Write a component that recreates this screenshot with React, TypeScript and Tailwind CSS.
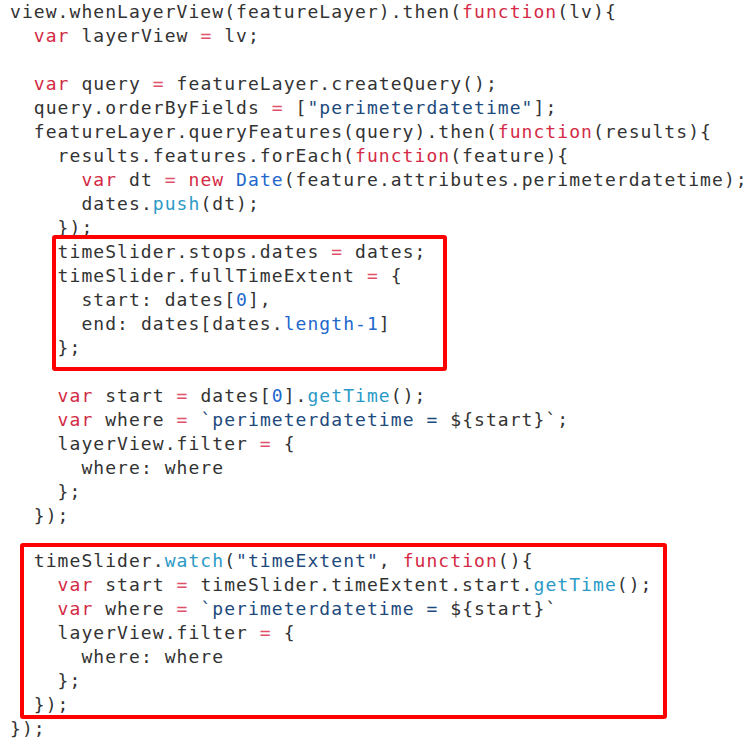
import type { ReactNode } from "react";

// token helpers
const K = ({ children }: { children: ReactNode }) => <span className="text-[#d42a45]">{children}</span>;
const O = ({ children }: { children: ReactNode }) => <span className="text-[#e0506a]">{children}</span>;
const S = ({ children }: { children: ReactNode }) => <span className="text-[#1d4a7c]">{children}</span>;
const N = ({ children }: { children: ReactNode }) => <span className="text-[#2167cc]">{children}</span>;
const M = ({ children }: { children: ReactNode }) => <span className="text-[#2b9ac6]">{children}</span>;

function Line({ children }: { children?: ReactNode }) {
  return <div className="h-[24px] leading-[24px] whitespace-pre">{children ?? " "}</div>;
}

export default function App() {
  return (
    <div className="w-[754px] h-[745px] bg-white overflow-hidden">
      <div
        className="pl-[10px] text-[18px] tracking-[1.06px] text-[#333333]"
        style={{ fontFamily: '"DejaVu Sans Mono", "Liberation Mono", monospace' }}
      >
        <Line>
          view.whenLayerView(featureLayer).then(<K>function</K>(lv){"{"}
        </Line>
        <Line>
          {"  "}<K>var</K> layerView <O>=</O> lv;
        </Line>
        <Line />
        <Line>
          {"  "}<K>var</K> query <O>=</O> featureLayer.createQuery();
        </Line>
        <Line>
          {"  "}query.orderByFields <O>=</O> [<S>"perimeterdatetime"</S>];
        </Line>
        <Line>
          {"  "}featureLayer.queryFeatures(query).then(<K>function</K>(results){"{"}
        </Line>
        <Line>
          {"    "}results.features.forEach(<K>function</K>(feature){"{"}
        </Line>
        <Line>
          {"      "}<K>var</K> dt <O>=</O> <K>new</K> <N>Date</N>(feature.attributes.perimeterdatetime);
        </Line>
        <Line>
          {"      "}dates.<M>push</M>(dt);
        </Line>
        <Line>{"    "}{"});"}</Line>

        {/* first highlight */}
        <div className="relative ml-[42px] -mt-[5px] -mb-[11px] w-[395px] border-4 border-[#ff0000] rounded-[3px] bg-white pt-[1px] pb-[7px] pl-[1.6px]">
          <Line>
            timeSlider.stops.dates <O>=</O> dates;
          </Line>
          <Line>
            timeSlider.fullTimeExtent <O>=</O> {"{"}
          </Line>
          <Line>
            {"  "}start: dates[<N>0</N>],
          </Line>
          <Line>
            {"  "}end: dates[dates.<N>length-1</N>]
          </Line>
          <Line>{"};"}</Line>
        </div>
        <Line />

        <Line>
          {"    "}<K>var</K> start <O>=</O> dates[<N>0</N>].<M>getTime</M>();
        </Line>
        <Line>
          {"    "}<K>var</K> where <O>=</O> <S>`perimeterdatetime = </S>{"${start}`;"}
        </Line>
        <Line>
          {"    "}layerView.filter <O>=</O> {"{"}
        </Line>
        <Line>{"      "}where: where</Line>
        <Line>{"    "}{"};"}</Line>
        <Line>{"  "}{"});"}</Line>

        {/* second highlight */}
        <div className="relative ml-[10px] mt-[15px] w-[647px] border-4 border-[#ff0000] rounded-[3px] bg-white pt-[2px] pl-[9.8px]">
          <div className="-mb-[2px]">
            <Line>
              timeSlider.<M>watch</M>(<S>"timeExtent"</S>, <K>function</K>(){"{"}
            </Line>
            <Line>
              {"  "}<K>var</K> start <O>=</O> timeSlider.timeExtent.start.<M>getTime</M>();
            </Line>
            <Line>
              {"  "}<K>var</K> where <O>=</O> <S>`perimeterdatetime = </S>{"${start}`"}
            </Line>
            <Line>
              {"  "}layerView.filter <O>=</O> {"{"}
            </Line>
            <Line>{"    "}where: where</Line>
            <Line>{"  "}{"};"}</Line>
            <Line>{"});"}</Line>
          </div>
        </div>

        <div className="-mt-[2px]">
          <Line>{"});"}</Line>
        </div>
      </div>
    </div>
  );
}
